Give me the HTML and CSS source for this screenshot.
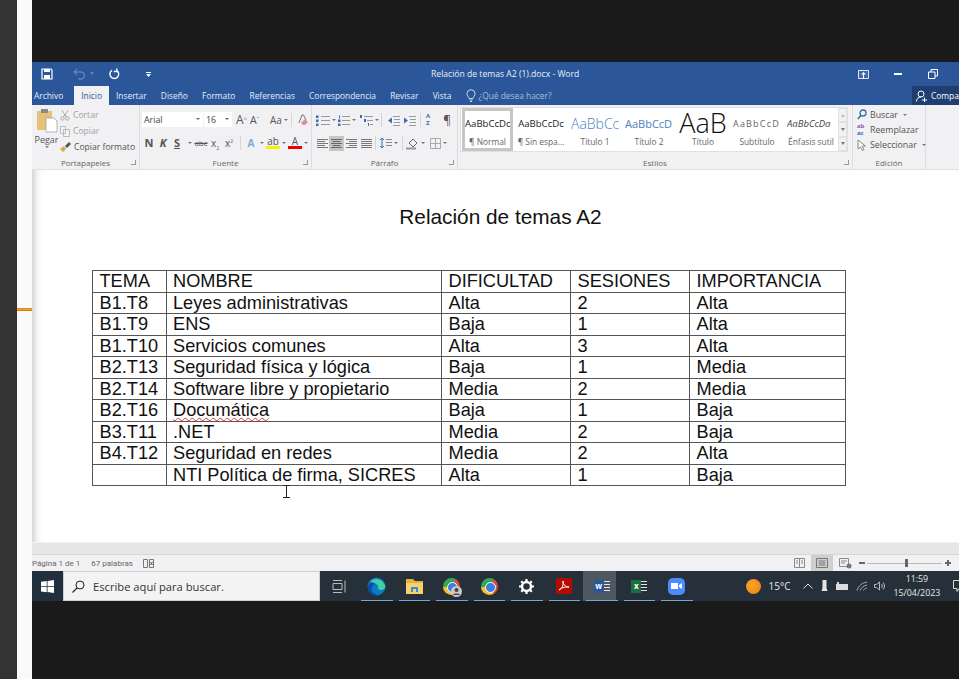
FILE: index.html
```html
<!DOCTYPE html>
<html lang="es">
<head>
    <meta charset="UTF-8">
    <meta name="viewport" content="width=device-width, initial-scale=1.0">
    <title>Relación de temas A2 (1).docx - Word</title>
    <link rel="stylesheet" href="styles.css">
</head>
<body>
<div class="screen">
    <div class="strip-dark"></div>
    <div class="strip-white"><span class="orange-mark"></span></div>

    <div class="main">
        <!-- barra de titulo -->
        <div class="titlebar">
            <div class="qat">
                <svg class="qat-save" width="12" height="12" viewBox="0 0 12 12"><path d="M1 1h9l1 1v9H1z" fill="none" stroke="#fff" stroke-width="1.2"/><path d="M3 1h6v3H3zM3 7h6v4H3z" fill="#fff"/></svg>
                <svg class="qat-undo" width="13" height="12" viewBox="0 0 13 12"><path d="M4 1L1 4l3 3M1 4h7a3.500 3.500 0 0 1 0 7H5" fill="none" stroke="#5f82b8" stroke-width="1.4"/></svg>
                <span class="qat-caret dim"></span>
                <svg class="qat-redo" width="12" height="12" viewBox="0 0 12 12"><path d="M4 2.400a4.400 4.400 0 1 0 4.600 0M8.800 0.500v3h-3" fill="none" stroke="#fff" stroke-width="1.4"/></svg>
                <svg class="qat-more" width="7" height="7" viewBox="0 0 7 7"><path d="M1 1h5v1H1zM1 3h5L3.500 6z" fill="#fff"/></svg>
            </div>
            <div class="doc-name">Relación de temas A2 (1).docx - Word</div>
            <div class="win-btns">
                <svg class="win-display" width="11" height="9" viewBox="0 0 11 9"><path d="M.5.500h10v8H.5z" fill="#3f68a6" stroke="#dfe6f1"/><path d="M5.500 2L3 4.500h2V8h1V4.500h2z" fill="#fff"/></svg>
                <span class="win-min"></span>
                <svg class="win-restore" width="10" height="10" viewBox="0 0 10 10"><path d="M.5 3h6.500v6.500H.5zM3 3V.5h6.500V7H7" fill="none" stroke="#fff"/></svg>
            </div>
        </div>

        <!-- pestañas -->
        <div class="tabs">
            <span class="tab tab-file">Archivo</span>
            <span class="tab tab-on">Inicio</span>
            <span class="tab">Insertar</span>
            <span class="tab">Diseño</span>
            <span class="tab">Formato</span>
            <span class="tab">Referencias</span>
            <span class="tab">Correspondencia</span>
            <span class="tab">Revisar</span>
            <span class="tab">Vista</span>
            <span class="tell-me">
                <svg width="10" height="13" viewBox="0 0 10 13"><path d="M3 9.500C2.500 7.500 1 7 1 4.700a4 4 0 0 1 8 0C9 7 7.500 7.500 7 9.500zM3.500 11h3M4 12.500h2" fill="none" stroke="#c6d3e6"/></svg>
                ¿Qué desea hacer?
            </span>
            <span class="share">
                <svg width="11" height="12" viewBox="0 0 11 12"><circle cx="5" cy="4" r="3" fill="none" stroke="#fff"/><path d="M.5 11.500c0-3 2-4.500 4.500-4.500M6 10h5M8.500 7.500v5" fill="none" stroke="#fff"/></svg>
                Compartir
            </span>
        </div>

        <!-- cinta -->
        <div class="ribbon">
            <section class="group g-clip">
                <div class="group-body clip-body">
                    <div class="paste">
                        <svg width="22" height="25" viewBox="0 0 22 25"><path d="M1 3h15v19H1z" fill="#e8c078"/><path d="M5 1h7v4H5z" fill="#8a8a8a"/><path d="M10 10h8l3 3v11H10z" fill="#fff" stroke="#999" stroke-width=".7"/></svg>
                        <span class="paste-name">Pegar</span>
                        <span class="caret"></span>
                    </div>
                    <div class="clip-list">
                        <div class="clip-row off">
                            <svg width="10" height="11" viewBox="0 0 10 11"><circle cx="2.500" cy="8.500" r="1.700" fill="none" stroke="#aaa"/><circle cx="7.500" cy="8.500" r="1.700" fill="none" stroke="#aaa"/><path d="M3.500 7L8 .5M6.500 7L2 .5" stroke="#aaa" fill="none"/></svg>
                            Cortar
                        </div>
                        <div class="clip-row off">
                            <svg width="10" height="11" viewBox="0 0 10 11"><path d="M.5.500h5v7h-5zM3.500 3.500h6v7h-6z" fill="#f3f2f4" stroke="#bbb"/></svg>
                            Copiar
                        </div>
                        <div class="clip-row">
                            <svg width="11" height="10" viewBox="0 0 11 10"><path d="M0 7l4-3 2 3-3 3z" fill="#dca64f"/><path d="M5 4l4-4 2 2-4 4z" fill="#555"/></svg>
                            Copiar formato
                        </div>
                    </div>
                </div>
                <div class="group-name">Portapapeles<span class="launcher"></span></div>
            </section>

            <section class="group g-font">
                <div class="group-body font-body">
                    <div class="font-row">
                        <span class="combo combo-font">Arial<span class="combo-arrow"></span></span>
                        <span class="combo combo-size">16<span class="combo-arrow"></span></span>
                        <span class="grow-a">A<sup>^</sup></span>
                        <span class="grow-a small-a">A<sup>ˇ</sup></span>
                        <span class="aa">Aa<span class="caret"></span></span>
                        <span class="vsep"></span>
                        <svg width="11" height="12" viewBox="0 0 11 12"><path d="M2 9L5 1h1.500L9 6" fill="none" stroke="#777"/><path d="M4 9l4-4 3 3-3 3H6z" fill="#e58a9b"/></svg>
                    </div>
                    <div class="font-row row-format">
                        <b class="fmt">N</b>
                        <b class="fmt"><i>K</i></b>
                        <b class="fmt under">S</b><span class="caret caret-s"></span>
                        <span class="fmt strike">abc</span>
                        <span class="fmt">x<sub>2</sub></span>
                        <span class="fmt">x<sup>2</sup></span>
                        <span class="vsep"></span>
                        <span class="fmt fx">A</span><span class="caret"></span>
                        <span class="fmt mark-yellow">ab</span><span class="caret"></span>
                        <span class="fmt mark-red">A</span><span class="caret"></span>
                    </div>
                </div>
                <div class="group-name">Fuente<span class="launcher"></span></div>
            </section>

            <section class="group g-para">
                <div class="group-body para-body">
                    <div class="para-row">
                        <svg width="14" height="11" viewBox="0 0 14 11"><path d="M5 1.500h9M5 5.500h9M5 9.500h9" stroke="#999"/><path d="M0 .5h2.500v2.500H0zM0 4.500h2.500v2.500H0zM0 8.500h2.500v2.500H0z" fill="#3c6db0"/></svg><span class="caret"></span>
                        <svg width="12" height="11" viewBox="0 0 12 11"><path d="M4 1.500h8M4 5.500h8M4 9.500h8" stroke="#999"/><path d="M1 .5h1v3H1zM0 4.500h2.500v2.500H0zM0 8.500h2.500v2.500H0z" fill="#3c6db0"/></svg><span class="caret"></span>
                        <svg class="ml-2" width="13" height="11" viewBox="0 0 13 11"><path d="M4 1.500h9M7 5.500h6M10 9.500h3" stroke="#999"/><path d="M0 0h2v3H0zM4 4h2v3H4zM8 8h1v3H8z" fill="#3c6db0"/></svg><span class="caret"></span>
                        <span class="vsep"></span>
                        <svg class="ml-6" width="12" height="11" viewBox="0 0 12 11"><path d="M5 1.500h7M6 4.500h6M6 7.500h6M5 10.500h7" stroke="#999"/><path d="M4 2.500v6L0 5.500z" fill="#3c6db0"/></svg>
                        <svg class="ml-4" width="12" height="11" viewBox="0 0 12 11"><path d="M5 1.500h7M6 4.500h6M6 7.500h6M5 10.500h7" stroke="#999"/><path d="M0 2.500v6l4-3z" fill="#3c6db0"/></svg>
                        <span class="vsep ml-4"></span>
                        <span class="sort-az">A<br>Z</span>
                        <span class="pilcrow">¶</span>
                    </div>
                    <div class="para-row row-align">
                        <svg class="ml-1" width="11" height="11" viewBox="0 0 11 11"><path d="M0 1.500h11M0 3.500h8M0 5.500h11M0 7.500h8M0 9.500h11" stroke="#777"/></svg>
                        <span class="align-on"><svg width="11" height="11" viewBox="0 0 11 11"><path d="M0 1.500h11M1.500 3.500h8M0 5.500h11M1.500 7.500h8M0 9.500h11" stroke="#666"/></svg></span>
                        <svg class="ml-1" width="11" height="11" viewBox="0 0 11 11"><path d="M0 1.500h11M3 3.500h8M0 5.500h11M3 7.500h8M0 9.500h11" stroke="#777"/></svg>
                        <svg class="ml-4" width="11" height="11" viewBox="0 0 11 11"><path d="M0 1.500h11M0 3.500h11M0 5.500h11M0 7.500h11M0 9.500h11" stroke="#777"/></svg>
                        <span class="vsep ml-3"></span>
                        <svg class="ml-4" width="12" height="12" viewBox="0 0 12 12"><path d="M2 1v10M0 3l2-2 2 2M0 9l2 2 2-2" fill="none" stroke="#3c6db0"/><path d="M6 2.500h6M6 5.500h6M6 8.500h6" stroke="#888"/></svg><span class="caret"></span>
                        <span class="vsep ml-2"></span>
                        <svg class="ml-3" width="13" height="13" viewBox="0 0 13 13"><path d="M3 6l4-4 4 4-4 4z" fill="none" stroke="#666"/><path d="M0 11.500h10" stroke="#999" stroke-width="2"/></svg><span class="caret"></span>
                        <svg class="ml-3" width="11" height="11" viewBox="0 0 11 11"><path d="M.5.500h10v10H.5zM5.500.5v10M.5 5.500h10" fill="none" stroke="#aaa"/></svg><span class="caret"></span>
                    </div>
                </div>
                <div class="group-name">Párrafo<span class="launcher"></span></div>
            </section>

            <section class="group g-styles">
                <div class="group-body">
                    <div class="gallery">
                        <div class="style-item style-on"><span class="st-prev st-normal">AaBbCcDc</span><span class="st-name">¶ Normal</span></div>
                        <div class="style-item"><span class="st-prev st-normal">AaBbCcDc</span><span class="st-name">¶ Sin espa...</span></div>
                        <div class="style-item"><span class="st-prev st-h1">AaBbCc</span><span class="st-name">Título 1</span></div>
                        <div class="style-item"><span class="st-prev st-h2">AaBbCcD</span><span class="st-name">Título 2</span></div>
                        <div class="style-item"><span class="st-prev st-title">AaB</span><span class="st-name">Título</span></div>
                        <div class="style-item"><span class="st-prev st-sub">AaBbCcD</span><span class="st-name">Subtítulo</span></div>
                        <div class="style-item"><span class="st-prev st-em">AaBbCcDa</span><span class="st-name">Énfasis sutil</span></div>
                        <div class="gallery-scroll">
                            <span class="scroll-btn"><i class="tri tri-up"></i></span>
                            <span class="scroll-btn"><i class="tri"></i></span>
                            <span class="scroll-btn"><i class="tri"></i></span>
                        </div>
                    </div>
                </div>
                <div class="group-name">Estilos<span class="launcher"></span></div>
            </section>

            <section class="group g-edit">
                <div class="group-body edit-body">
                    <div class="edit-row">
                        <svg width="10" height="11" viewBox="0 0 10 11"><circle cx="6" cy="4" r="3" fill="none" stroke="#2b6cb0" stroke-width="1.300"/><path d="M4 6.500L.8 10" stroke="#2b6cb0" stroke-width="1.500"/></svg>
                        Buscar<span class="caret"></span>
                    </div>
                    <div class="edit-row">
                        <span class="ab-ic"><em>ab</em><em>ac</em></span>
                        Reemplazar
                    </div>
                    <div class="edit-row">
                        <svg width="10" height="12" viewBox="0 0 10 12"><path d="M1 1v9l2.500-2 2 3.500 1.500-1L5 7h3.500z" fill="#fff" stroke="#888"/></svg>
                        Seleccionar<span class="caret"></span>
                    </div>
                </div>
                <div class="group-name">Edición</div>
            </section>
        </div>

        <!-- documento -->
        <div class="doc">
            <h1 class="doc-title">Relación de temas A2</h1>
            <table class="doc-table">
                <tr><td class="c1">TEMA</td><td class="c2">NOMBRE</td><td class="c3">DIFICULTAD</td><td class="c4">SESIONES</td><td>IMPORTANCIA</td></tr>
                <tr><td>B1.T8</td><td>Leyes administrativas</td><td>Alta</td><td>2</td><td>Alta</td></tr>
                <tr><td>B1.T9</td><td>ENS</td><td>Baja</td><td>1</td><td>Alta</td></tr>
                <tr><td>B1.T10</td><td>Servicios comunes</td><td>Alta</td><td>3</td><td>Alta</td></tr>
                <tr><td>B2.T13</td><td>Seguridad física y lógica</td><td>Baja</td><td>1</td><td>Media</td></tr>
                <tr><td>B2.T14</td><td>Software libre y propietario</td><td>Media</td><td>2</td><td>Media</td></tr>
                <tr><td>B2.T16</td><td><span class="spell">Documática</span></td><td>Baja</td><td>1</td><td>Baja</td></tr>
                <tr><td>B3.T11</td><td>.NET</td><td>Media</td><td>2</td><td>Baja</td></tr>
                <tr><td>B4.T12</td><td>Seguridad en redes</td><td>Media</td><td>2</td><td>Alta</td></tr>
                <tr><td></td><td>NTI Política de firma, SICRES</td><td>Alta</td><td>1</td><td>Baja</td></tr>
            </table>
            <svg class="ibeam" width="9" height="13" viewBox="0 0 9 13"><path d="M1 .5h7M1 12.500h7M4.500.5v12" fill="none" stroke="#222"/></svg>
        </div>
        <div class="h-scroll"></div>

        <!-- barra de estado -->
        <div class="statusbar">
            <span class="st-page">Página 1 de 1</span>
            <span class="st-words">67 palabras</span>
            <svg width="11" height="9" viewBox="0 0 11 9"><path d="M.5.500h4v8h-4zM6.500.5h4v8h-4z" fill="none" stroke="#777"/><path d="M7.500 3l2 3M9.500 3l-2 3" stroke="#555"/></svg>
            <div class="st-right">
                <svg width="11" height="10" viewBox="0 0 11 10"><path d="M.5.500h10v9H.5zM5.500.5v9M2 3h2M2 5h2M7 3h2M7 5h2" fill="none" stroke="#888"/></svg>
                <span class="view-on"><svg width="12" height="10" viewBox="0 0 12 10"><path d="M.5.500h11v9H.5zM2.500 3h7M2.500 5h7M2.500 7h7" fill="none" stroke="#777"/></svg></span>
                <svg width="13" height="11" viewBox="0 0 13 11"><path d="M.5.500h9v8h-9zM2 3h6M2 5h4" fill="none" stroke="#888"/><circle cx="10" cy="8" r="2.500" fill="#777"/></svg>
                <span class="zoom-minus"></span>
                <span class="zoom-track"><span class="zoom-thumb"></span></span>
                <span class="zoom-plus"></span>
            </div>
        </div>

        <!-- barra de tareas -->
        <div class="taskbar">
            <div class="start">
                <svg width="13" height="13" viewBox="0 0 13 13"><path d="M0 1.800L5.700 1v5.200H0zM6.500.9L13 0v6.200H6.500zM0 7h5.700v5.200L0 11.400zM6.500 7H13v6l-6.500-.9z" fill="#fff"/></svg>
            </div>
            <div class="search">
                <svg width="13" height="13" viewBox="0 0 13 13"><circle cx="8" cy="5" r="4" fill="none" stroke="#222"/><path d="M5 8l-4.500 4.500" stroke="#222" stroke-width="1.100"/></svg>
                <span>Escribe aquí para buscar.</span>
            </div>
            <div class="taskview">
                <svg width="14" height="13" viewBox="0 0 14 13"><path d="M1 .5h9M1 12.500h9M1 3.500h9v6H1zM13 .5v12" fill="none" stroke="#bbb"/></svg>
            </div>
            <div class="slot">
                <svg width="19" height="19" viewBox="0 0 19 19"><circle cx="9.500" cy="9.500" r="9" fill="#0c78c9"/><path d="M1 9C3 3 14 1 18 8c1 3-1 5-4 5-2 0-3-1-3-2 3-1 1-5-3-4-3 1-4 4-3 7 1 2 3 3 5 4C5 19 0 15 1 9z" fill="#0c4f9e"/><path d="M3 5c4-5 12-4 15 3 1 3-1 5-4 5-2 0-3-1-3-2 2-3-5-6-8-6z" fill="#3fd0a5"/></svg>
            </div>
            <div class="slot">
                <svg width="17" height="15" viewBox="0 0 17 15"><path d="M0 0h7l2 2h8v3H0z" fill="#e5b040"/><path d="M0 4h17v11H0z" fill="#f7d26a"/><path d="M5 8h7v5H5z" fill="#2f8fd8"/><path d="M7 10h3v3H7z" fill="#f7d26a"/></svg>
            </div>
            <div class="slot">
                <span class="chrome"></span>
                <svg class="profile-badge" width="11" height="11" viewBox="0 0 11 11"><circle cx="5.500" cy="5.500" r="5.500" fill="#c9c9c9"/><circle cx="5.500" cy="4" r="2" fill="#444"/><path d="M2 9c0-2 7-2 7 0z" fill="#444"/></svg>
            </div>
            <div class="slot"><span class="chrome"></span></div>
            <div class="slot">
                <svg width="15" height="15" viewBox="0 0 15 15"><circle cx="7.500" cy="7.500" r="4.500" fill="none" stroke="#fff" stroke-width="2.500"/><path d="M7.500 0v15M0 7.500h15M2.200 2.200l10.600 10.600M12.800 2.200L2.200 12.800" stroke="#fff" stroke-width="2.200" stroke-dasharray="2.500 10 2.500"/></svg>
            </div>
            <div class="slot">
                <span class="pdf"><svg width="12" height="12" viewBox="0 0 12 12"><path d="M1 10c3-1 5-6 4-9-1 2 2 6 6 6-3 0-7 0-10 3z" fill="none" stroke="#fff"/></svg></span>
            </div>
            <div class="slot slot-on">
                <span class="office word"><b>w</b><i></i></span>
            </div>
            <div class="slot">
                <span class="office excel"><b>x</b><i></i></span>
            </div>
            <div class="slot">
                <span class="zoom-app"><svg width="11" height="8" viewBox="0 0 11 8"><path d="M0 1h7v6H0zM8 3l3-2v6L8 5z" fill="#fff"/></svg></span>
            </div>
            <div class="tray">
                <span class="sun"></span>
                <span class="temp">15°C</span>
                <svg width="10" height="6" viewBox="0 0 10 6"><path d="M.5 5.500L5 1l4.500 4.500" fill="none" stroke="#ddd"/></svg>
                <svg width="7" height="12" viewBox="0 0 7 12"><path d="M1.500 0h4v8l1 3h-6l1-3z" fill="#e4e4e4"/></svg>
                <svg width="12" height="8" viewBox="0 0 12 8"><path d="M0 2h12v6H0z" fill="#ddd"/><path d="M1 0h2v2H1z" fill="#ddd"/></svg>
                <svg width="12" height="10" viewBox="0 0 12 10"><path d="M1 9.500C2 5 6 2 11 1M4 9.500C5 7 7 5 11 4M7 9.500C8 8.500 9 7.500 11 7" fill="none" stroke="#aaa"/></svg>
                <svg class="tray-vol" width="11" height="10" viewBox="0 0 11 10"><path d="M.5 3.500h2L5.500 1v8l-3-2.500h-2zM7.500 3c1 1 1 3 0 4M9 1.500c2 2 2 5 0 7" fill="none" stroke="#bbb"/></svg>
                <div class="clock"><span>11:59</span><span>15/04/2023</span></div>
                <svg class="notif" width="13" height="12" viewBox="0 0 13 12"><path d="M.5.500h12v8H6l-2 3v-3H.5z" fill="none" stroke="#ddd"/></svg>
            </div>
        </div>
    </div>
</div>
</body>
</html>
```

FILE: styles.css
```css
* {
    margin: 0;
    padding: 0;
    box-sizing: border-box;
}

html, body {
    height: 100%;
    overflow: hidden;
}

body {
    background-color: #1a1a1a;
    font-family: "Open Sans", "Noto Sans", sans-serif;
    font-size: 8.5px;
    color: #555;
}

svg {
    display: block;
    flex: none;
}

.ml-1 {
    margin-left: 1px;
}

.ml-2 {
    margin-left: 2px;
}

.ml-3 {
    margin-left: 3px;
}

.ml-4 {
    margin-left: 4px;
}

.ml-6 {
    margin-left: 6px;
}

.screen {
    display: flex;
    height: 679px;
}

.strip-dark {
    width: 17px;
    background-color: #333;
}

.strip-white {
    width: 15px;
    background-color: #fafafa;
    position: relative;
}

.orange-mark {
    position: absolute;
    left: 0;
    right: 0;
    top: 308px;
    height: 3px;
    background: linear-gradient(#c9801c, #f0a52a 50%, #b5651d);
}

.main {
    flex: 1;
    min-width: 0;
    padding-top: 62px;
    display: flex;
    flex-direction: column;
}

/* barra de titulo */
.titlebar {
    height: 24px;
    background-color: #2b579a;
    display: flex;
    align-items: center;
    position: relative;
    flex: none;
}

.qat {
    display: flex;
    align-items: center;
    padding-left: 9px;
}

.qat-undo {
    margin-left: 20px;
}

.qat-caret {
    width: 0;
    height: 0;
    margin-left: 4px;
    border: 2px solid transparent;
    border-top: 3px solid #5f82b8;
}

.qat-redo {
    margin-left: 14px;
}

.qat-more {
    margin-left: 25px;
}

.doc-name {
    position: absolute;
    left: 399px;
    color: #e9eef6;
    font-size: 8.6px;
}

.win-btns {
    margin-left: auto;
    display: flex;
    align-items: center;
    padding-right: 21px;
}

.win-min {
    width: 8px;
    height: 2px;
    background-color: #fff;
    margin-left: 25px;
}

.win-restore {
    margin-left: 26px;
}

/* pestañas */
.tabs {
    height: 19px;
    background-color: #2b579a;
    display: flex;
    align-items: stretch;
    flex: none;
    color: #e6ecf5;
    font-size: 8.4px;
    padding-left: 2px;
}

.tab {
    display: flex;
    align-items: center;
    margin-right: 14.2px;
    white-space: nowrap;
}

.tab-file {
    margin-right: 11px;
}

.tab-on {
    background-color: #f1f0f2;
    color: #2b579a;
    padding: 0 7px;
    margin-right: 7px;
}

.tell-me {
    display: flex;
    align-items: center;
    gap: 3px;
    color: #a9bdd9;
    white-space: nowrap;
}

.share {
    margin-left: auto;
    width: 47px;
    background-color: #1f3f70;
    display: flex;
    align-items: center;
    gap: 4px;
    padding-left: 4px;
    overflow: hidden;
    white-space: nowrap;
    color: #fff;
}

/* cinta */
.ribbon {
    height: 65px;
    flex: none;
    display: flex;
    background-color: #f1f0f2;
    border-bottom: 1px solid #e2e2e2;
}

.group {
    display: flex;
    flex-direction: column;
    border-right: 1px solid #dcdbdd;
    position: relative;
}

.group-body {
    flex: 1;
    min-height: 0;
}

.group-name {
    height: 12px;
    text-align: center;
    font-size: 8px;
    color: #666;
    line-height: 12px;
}

.launcher {
    position: absolute;
    right: 3px;
    bottom: 4px;
    width: 5px;
    height: 5px;
    border-left: 1px solid #999;
    border-bottom: 1px solid #999;
    transform: scaleX(-1);
}

.caret {
    display: inline-block;
    flex: none;
    width: 0;
    height: 0;
    border-left: 2px solid transparent;
    border-right: 2px solid transparent;
    border-top: 2px solid #777;
    margin: 0 2px;
}

.vsep {
    display: block;
    flex: none;
    width: 1px;
    height: 14px;
    background-color: #d5d4d6;
}

.g-clip {
    width: 108px;
}

.clip-body {
    display: flex;
    padding: 2px 0 0 1px;
}

.paste {
    width: 27px;
    display: flex;
    flex-direction: column;
    align-items: center;
    color: #555;
    font-size: 9px;
    padding-top: 1px;
}

.paste-name {
    margin-top: 1px;
    line-height: 12px;
}

.clip-list {
    margin-left: 0;
}

.clip-row {
    display: flex;
    align-items: center;
    gap: 3px;
    height: 16px;
    white-space: nowrap;
    font-size: 8.6px;
}

.clip-row.off {
    color: #a3a3a3;
}

.g-font {
    width: 172px;
}

.font-body {
    padding: 7px 0 0 2px;
}

.font-row {
    display: flex;
    align-items: center;
    height: 15px;
}

.combo {
    display: flex;
    align-items: center;
    height: 15px;
    background-color: #fff;
    font-size: 8.8px;
    color: #444;
    padding-left: 2px;
    position: relative;
}

.combo-font {
    width: 61px;
    margin-right: 1px;
}

.combo-size {
    width: 28px;
}

.combo-arrow {
    position: absolute;
    right: 3px;
    top: 6px;
    border-left: 2px solid transparent;
    border-right: 2px solid transparent;
    border-top: 2px solid #666;
}

.grow-a {
    margin-left: 4px;
    width: 12px;
    font-size: 12px;
    color: #555;
}

.grow-a sup {
    font-size: 6px;
    color: #3c6db0;
    vertical-align: 3px;
    line-height: 0;
}

.small-a {
    margin-left: 2px;
    font-size: 10.5px;
}

.aa {
    margin-left: 8px;
    font-size: 10px;
    width: 21px;
    display: flex;
    align-items: center;
}

.font-row .vsep + svg {
    margin-left: 5px;
}

.row-format {
    margin-top: 8px;
}

.fmt {
    font-size: 10px;
    width: 14px;
    text-align: center;
    color: #555;
    display: block;
    flex: none;
    line-height: 12px;
}

b.fmt {
    font-size: 11px;
}

.fmt sub, .fmt sup {
    font-size: 5px;
    line-height: 0;
    color: #3c6db0;
}

.under {
    text-decoration: underline;
}

.caret-s {
    margin-left: 4px;
}

.strike {
    text-decoration: line-through;
    font-size: 8px;
}

.row-format .vsep {
    margin: 0 3px 0 4px;
}

.fx {
    color: #7fa6d8;
    font-weight: 700;
}

.mark-yellow {
    border-bottom: 3px solid #ffef00;
    line-height: 9px;
}

.mark-red {
    border-bottom: 3px solid #e00;
    line-height: 9px;
}

.g-para {
    width: 146px;
}

.para-body {
    padding: 8px 0 0 4px;
}

.para-row {
    display: flex;
    align-items: center;
    height: 14px;
}

.sort-az {
    display: block;
    font-size: 6px;
    line-height: 7px;
    font-weight: 700;
    color: #3c6db0;
    margin-left: 5px;
}

.pilcrow {
    font-size: 12px;
    margin-left: 13px;
    color: #555;
}

.row-align {
    margin-top: 8px;
    height: 16px;
}

.align-on {
    width: 15px;
    height: 15px;
    background-color: #c6c6c6;
    display: flex;
    align-items: center;
    justify-content: center;
    margin: 0 1px;
}

.g-styles {
    width: 395px;
}

.gallery {
    display: flex;
    margin: 2px 4px 0 2px;
    height: 45px;
    background-color: #fff;
    border: 1px solid #e0e0e0;
    padding-left: 1px;
}

.style-item {
    width: 54px;
    flex: none;
    display: flex;
    flex-direction: column;
    align-items: center;
    overflow: hidden;
    border: 3px solid transparent;
    white-space: nowrap;
    height: 43px;
}

.style-on {
    border-color: #c6c6c6;
    width: 51px;
    margin-right: 1px;
}

.st-prev {
    height: 25px;
    line-height: 25px;
    width: 100%;
    overflow: hidden;
    text-align: center;
    font-size: 9.6px;
    color: #222;
}

.st-normal {
    font-family: "Open Sans", sans-serif;
}

.st-h1 {
    color: #4a7fc0;
    font-size: 14px;
    font-weight: 300;
    text-align: left;
}

.st-h2 {
    color: #4a7fc0;
    font-size: 11px;
    text-align: left;
}

.st-title {
    font-size: 27px;
    font-weight: 300;
    color: #111;
    line-height: 24px;
}

.st-sub {
    color: #666;
    font-size: 9px;
    letter-spacing: 1.2px;
    text-align: left;
}

.st-em {
    color: #444;
    font-style: italic;
    font-size: 9.5px;
    text-align: left;
}

.st-name {
    font-size: 8.4px;
    color: #666;
    line-height: 12px;
}

.gallery-scroll {
    width: 10px;
    margin-left: auto;
    display: flex;
    flex-direction: column;
    background-color: #f1f0f2;
}

.scroll-btn {
    flex: 1;
    border: 1px solid #e2e2e2;
    display: flex;
    align-items: center;
    justify-content: center;
}

.tri {
    border-left: 2px solid transparent;
    border-right: 2px solid transparent;
    border-top: 3px solid #777;
}

.tri-up {
    border-top: 0;
    border-bottom: 3px solid #bbb;
}

.g-edit {
    width: 73px;
}

.edit-body {
    padding: 2px 0 0 4px;
}

.edit-row {
    display: flex;
    align-items: center;
    gap: 3px;
    height: 15px;
    white-space: nowrap;
    font-size: 8.8px;
}

.ab-ic {
    display: block;
    width: 10px;
    font-size: 6px;
    line-height: 7px;
    font-weight: 700;
    flex: none;
}

.ab-ic em {
    display: block;
    font-style: normal;
    color: #8a5aa8;
}

.ab-ic em + em {
    color: #2b6cb0;
}

/* documento */
.doc {
    height: 372px;
    flex: none;
    background-color: #fff;
    padding: 35px 0 0 60px;
    box-shadow: inset 9px 0 8px -7px #c4c4c4;
    position: relative;
    font-family: "Liberation Sans", Arial, sans-serif;
    color: #111;
}

.doc-title {
    width: 754px;
    padding-left: 63px;
    text-align: center;
    font-size: 20.8px;
    font-weight: 400;
    line-height: 23px;
    margin-bottom: 42px;
}

.doc-table {
    width: 754px;
    border-collapse: collapse;
    table-layout: fixed;
    font-size: 18.2px;
}

.doc-table td {
    border: 1px solid #555;
    height: 21.5px;
    padding: 0 6.5px;
    line-height: 20px;
    white-space: nowrap;
}

.c1 {
    width: 73.5px;
}

.c2 {
    width: 275.5px;
}

.c3 {
    width: 129px;
}

.c4 {
    width: 119px;
}

.spell {
    text-decoration: underline wavy #d9332b 1px;
    text-underline-offset: 1px;
}

.ibeam {
    position: absolute;
    left: 250px;
    top: 315px;
}

.h-scroll {
    height: 13px;
    flex: none;
    background-color: #e6e6e6;
    border-top: 1px solid #f3f3f3;
    border-bottom: 1px solid #d6d6d6;
}

/* barra de estado */
.statusbar {
    height: 16px;
    flex: none;
    background-color: #f1f0f2;
    display: flex;
    align-items: center;
    font-family: Roboto, "Open Sans", sans-serif;
    font-size: 8px;
    white-space: nowrap;
    color: #666;
}

.st-page {
    margin-right: 11px;
}

.st-words {
    margin-right: 10px;
}

.st-right {
    margin-left: auto;
    display: flex;
    align-items: center;
    padding-right: 8px;
}

.view-on {
    width: 22px;
    height: 16px;
    background-color: #cfcfcf;
    display: flex;
    align-items: center;
    justify-content: center;
    margin: 0 6px;
}

.zoom-minus, .zoom-plus {
    width: 6px;
    height: 2px;
    background-color: #666;
    position: relative;
}

.zoom-minus {
    margin-left: 7px;
}

.zoom-plus::after {
    content: '';
    position: absolute;
    left: 2px;
    top: -2px;
    width: 2px;
    height: 6px;
    background-color: #666;
}

.zoom-track {
    width: 75px;
    height: 1px;
    background-color: #bbb;
    margin: 0 3px 0 2px;
    position: relative;
}

.zoom-thumb {
    position: absolute;
    left: 38px;
    top: -4px;
    width: 3px;
    height: 8px;
    background-color: #666;
}

/* barra de tareas */
.taskbar {
    height: 30px;
    flex: none;
    background-color: #25303a;
    display: flex;
    align-items: stretch;
}

.start {
    width: 31px;
    background-color: #22303e;
    display: flex;
    align-items: center;
    justify-content: center;
}

.search {
    width: 257px;
    background-color: #f3f3f3;
    border: 1px solid #cfcfcf;
    display: flex;
    align-items: center;
    padding-left: 8px;
    gap: 8px;
    font-size: 11.2px;
    color: #333;
    white-space: nowrap;
}

.taskview {
    width: 38px;
    display: flex;
    align-items: center;
    justify-content: center;
}

.slot {
    width: 37.5px;
    display: flex;
    align-items: center;
    justify-content: center;
    position: relative;
}

.slot::after {
    content: '';
    position: absolute;
    left: 3px;
    right: 3px;
    bottom: 0;
    height: 1.5px;
    background-color: #6ea6dc;
}

.slot-on {
    background: linear-gradient(#4d5861, #4d5861) 0 0 / 33px 100% no-repeat;
}

.chrome {
    width: 17px;
    height: 17px;
    border-radius: 50%;
    background: conic-gradient(from 30deg, #e8483b 0 120deg, #f6c12d 120deg 240deg, #34a853 240deg 360deg);
    position: relative;
}

.chrome::after {
    content: '';
    position: absolute;
    left: 4px;
    top: 4px;
    width: 9px;
    height: 9px;
    border-radius: 50%;
    background-color: #3b7de0;
    border: 1.5px solid #fff;
}

.profile-badge {
    position: absolute;
    left: 18px;
    top: 15px;
}

.pdf {
    width: 16px;
    height: 16px;
    border-radius: 2px;
    background-color: #b30b00;
    display: flex;
    align-items: center;
    justify-content: center;
}

.office {
    width: 16px;
    height: 13px;
    display: flex;
    position: relative;
}

.office b {
    width: 10px;
    height: 13px;
    color: #fff;
    font-size: 8px;
    line-height: 12px;
    text-align: center;
    font-weight: 700;
}

.office i {
    width: 6px;
    height: 11px;
    margin-top: 1px;
    background: repeating-linear-gradient(#e8e8e8 0 1.5px, transparent 1.5px 3px);
}

.word b {
    background-color: #2b579a;
}

.excel b {
    background-color: #1d6f42;
}

.zoom-app {
    width: 17px;
    height: 17px;
    border-radius: 5px;
    background-color: #4a8cff;
    display: flex;
    align-items: center;
    justify-content: center;
}

.tray {
    display: flex;
    align-items: center;
    color: #e8e8e8;
    margin-left: 50px;
    flex: 1;
    min-width: 0;
    white-space: nowrap;
}

.sun {
    width: 15px;
    height: 15px;
    border-radius: 50%;
    background: radial-gradient(circle at 40% 40%, #f9a825, #ee7a12);
    flex: none;
}

.temp {
    font-size: 10px;
    margin: 0 12px 0 8px;
}

.tray svg {
    margin-right: 8px;
}

.tray .tray-vol {
    margin-left: -2px;
    margin-right: 0;
}

.clock {
    display: flex;
    flex-direction: column;
    align-items: center;
    font-size: 8.8px;
    line-height: 14px;
    margin-left: 9px;
}

.tray .notif {
    margin: 0 0 0 13px;
}
```
